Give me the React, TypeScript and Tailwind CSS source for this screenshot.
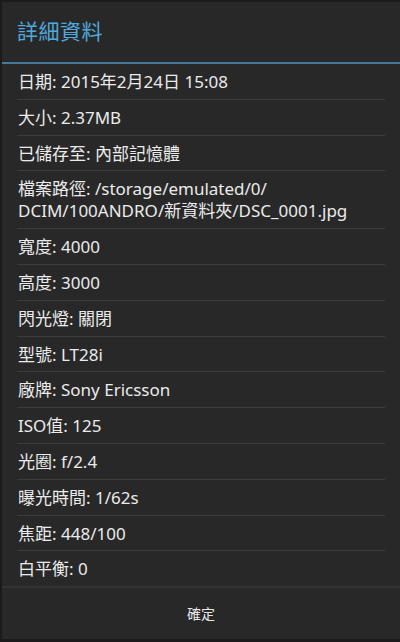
import React from "react";

const rows: string[][] = [
  ["日期: 2015年2月24日 15:08"],
  ["大小: 2.37MB"],
  ["已儲存至: 內部記憶體"],
  ["檔案路徑: /storage/emulated/0/", "DCIM/100ANDRO/新資料夾/DSC_0001.jpg"],
  ["寬度: 4000"],
  ["高度: 3000"],
  ["閃光燈: 關閉"],
  ["型號: LT28i"],
  ["廠牌: Sony Ericsson"],
  ["ISO值: 125"],
  ["光圈: f/2.4"],
  ["曝光時間: 1/62s"],
  ["焦距: 448/100"],
  ["白平衡: 0"],
];

export default function App() {
  return (
    <div
      className="w-[400px] h-[642px] bg-[#1c1a1a] pl-[2px] pt-[2px] pb-[3px] flex flex-col"
      style={{ fontFamily: '"Noto Sans", "Noto Sans CJK TC", sans-serif' }}
    >
      <div className="flex-1 bg-[#282828] flex flex-col overflow-hidden">
        <div className="h-[60px] flex items-center pl-[15px] text-[21px] text-[#4fa9dd] tracking-[0.5px]">
          詳細資料
        </div>
        <div className="h-[2px] bg-[#44799c]" />
        <div className="flex flex-col">
          {rows.map((r, i) => (
            <div key={i} className="mx-[15px] flex flex-col">
              <div className="pt-[7px] pb-[5.8px] px-[1px] text-[17px] leading-[22px] text-[#ebebeb]">
                {r.map((l, j) => (
                  <div key={j}>{l}</div>
                ))}
              </div>
              {i < rows.length - 1 && <div className="h-[1px] bg-[#3d3d3d]" />}
            </div>
          ))}
        </div>
        <div className="h-[2px] bg-[#333333]" />
        <div className="flex-1 flex items-center justify-center text-[14px] text-[#e6e6e6]">
          確定
        </div>
      </div>
    </div>
  );
}
